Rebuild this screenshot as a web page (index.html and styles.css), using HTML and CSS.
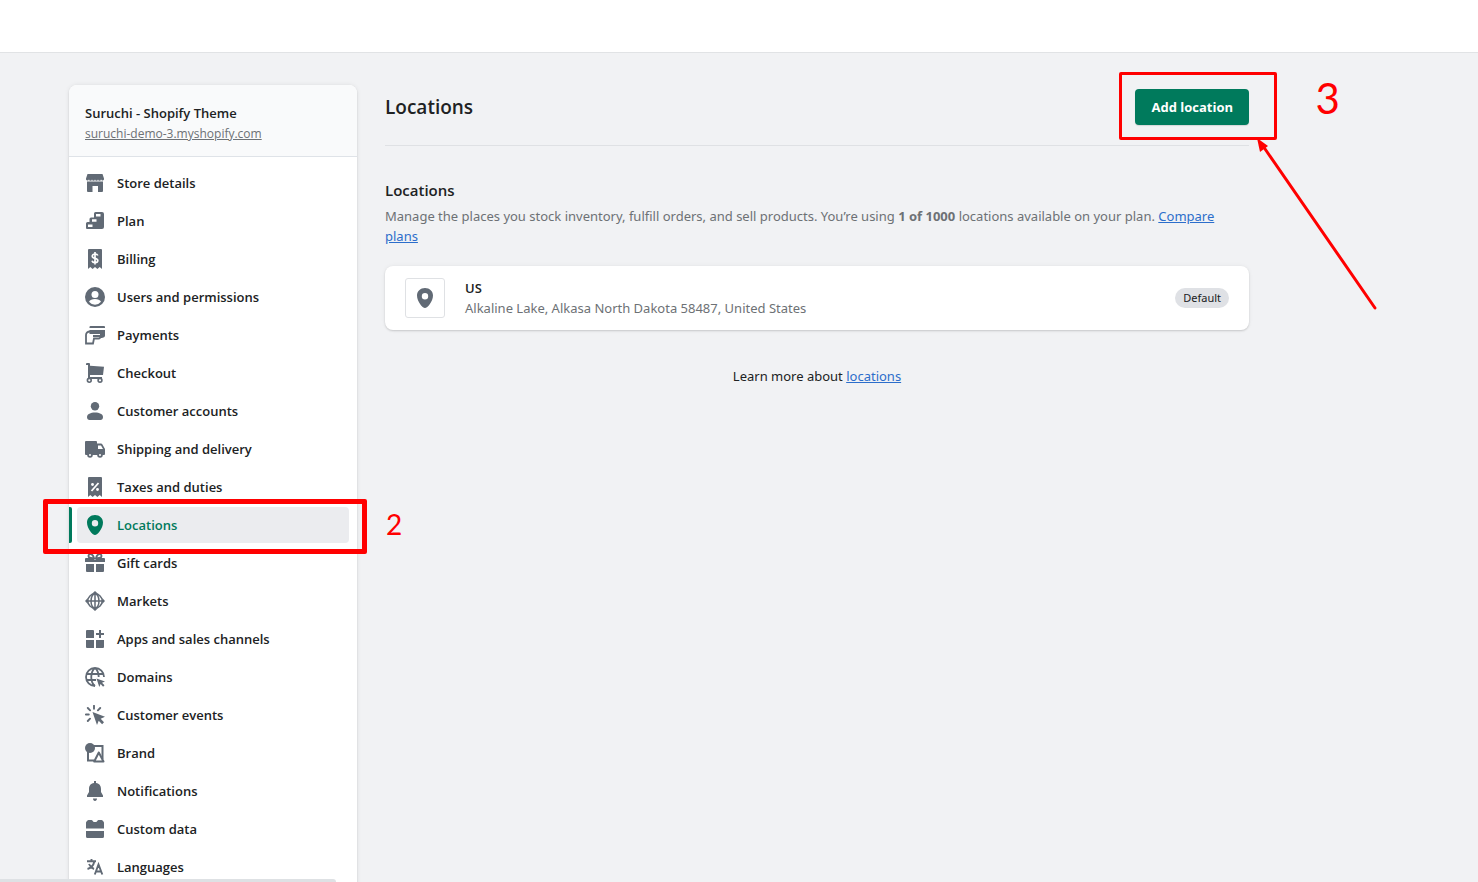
FILE: index.html
```html
<!DOCTYPE html>
<html lang="en">
<head>
<meta charset="utf-8">
<meta name="viewport" content="width=device-width, initial-scale=1">
<title>Locations - Settings</title>
<link rel="stylesheet" href="styles.css">
</head>
<body>
<div class="app">
  <header class="topbar"></header>
  <div class="page">
    <aside class="sidebar">
      <div class="store">
        <div class="store-name">Suruchi - Shopify Theme</div>
        <a class="store-link" href="#">suruchi-demo-3.myshopify.com</a>
      </div>
      <nav aria-label="Settings">
        <ul class="nav">
          <li><a class="nav-link" href="#"><svg class="icon" viewBox="0 0 20 20"><path d="M2.500 1h15L19 5.500a1.500 1.500 0 0 1-3 .8 1.500 1.500 0 0 1-3 0 1.500 1.500 0 0 1-3 0 1.500 1.500 0 0 1-3 0 1.500 1.500 0 0 1-3 0 1.500 1.500 0 0 1-3-.8z"/><path d="M2 8.500h16V18a1 1 0 0 1-1 1h-4v-6H7.500v6H3a1 1 0 0 1-1-1z"/></svg>Store details</a></li>
          <li><a class="nav-link" href="#"><svg class="icon" viewBox="0 0 20 20"><path fill-rule="evenodd" d="M10.500 1H17a2 2 0 0 1 2 2v13a2 2 0 0 1-2 2H2a1 1 0 0 1-1-1v-4.500A1.500 1.500 0 0 1 2.500 11H4.500V8A1.500 1.500 0 0 1 6 6.500h3v-4A1.500 1.500 0 0 1 10.500 1zM11 3v2.500h4.500V3zM7 8.200v2.500h4.500V8.200zM3 13.500V16h4.500v-2.500z"/></svg>Plan</a></li>
          <li><a class="nav-link" href="#"><svg class="icon" viewBox="0 0 20 20"><path d="M4 0h12a1 1 0 0 1 1 1v19l-2.300-2-2.300 2-2.400-2-2.400 2-2.300-2L3 20V1a1 1 0 0 1 1-1z"/><path d="M12.800 6.600C12.400 5.400 11.400 5 10 5c-1.600 0-2.700.8-2.700 2.200C7.300 10 12.800 8.500 12.800 11.500c0 1.400-1.200 2.200-2.800 2.200-1.500 0-2.600-.6-3-1.900M10 3v12.500" fill="none" stroke="#fff" stroke-width="1.700"/></svg>Billing</a></li>
          <li><a class="nav-link" href="#"><svg class="icon" viewBox="0 0 20 20"><circle cx="10" cy="10" r="10"/><circle cx="10" cy="7.500" r="3.500" fill="#fff"/><path d="M4 14.800c1-2 3.200-2.800 6-2.800s5 .8 6 2.800a7.700 7.700 0 0 1-12 0z" fill="#fff"/></svg>Users and permissions</a></li>
          <li><a class="nav-link" href="#"><svg class="icon" viewBox="0 0 20 20"><path d="M5.500 1H19a1 1 0 0 1 1 1v1H4.500V2a1 1 0 0 1 1-1z"/><path d="M4.500 5H20v5.500c0 2-2.500 2.500-5 2.500V9H4.500z"/><path d="M5 6.500C2.500 6.500 1 8 1 10v8.500h7l1-5h4.500c1.500 0 2-.8 2-2.500H8" fill="none" stroke="currentColor" stroke-width="1.800"/></svg>Payments</a></li>
          <li><a class="nav-link" href="#"><svg class="icon" viewBox="0 0 20 20"><path d="M2 0h2a1 1 0 0 1 1 1v1.700l14 1-1 8.300H5v2h12v2H4a1 1 0 0 1-1-1V2H1V1a1 1 0 0 1 1-1z"/><circle cx="4.300" cy="17.300" r="1.900" fill="#fff" stroke="currentColor" stroke-width="1.600"/><circle cx="15" cy="17.300" r="1.900" fill="#fff" stroke="currentColor" stroke-width="1.600"/></svg>Checkout</a></li>
          <li><a class="nav-link" href="#"><svg class="icon" viewBox="0 0 20 20"><circle cx="10" cy="5.200" r="4.200"/><path d="M2 16c0-2.800 3.600-4.500 8-4.500s8 1.700 8 4.500c0 2-1 3-2.500 3h-11C3 19 2 18 2 16z"/></svg>Customer accounts</a></li>
          <li><a class="nav-link" href="#"><svg class="icon" viewBox="0 0 20 20"><path fill-rule="evenodd" d="M1 2h10a1 1 0 0 1 1 1v1.500h4c.6 0 1 .3 1.300.8L20 10v5a1 1 0 0 1-1 1H1a1 1 0 0 1-1-1V3a1 1 0 0 1 1-1zm12 4.500V10h5l-2-3.500z"/><circle cx="5" cy="16" r="2.800"/><circle cx="15" cy="16" r="2.800"/><circle cx="5" cy="16" r="1" fill="#fff"/><circle cx="15" cy="16" r="1" fill="#fff"/></svg>Shipping and delivery</a></li>
          <li><a class="nav-link" href="#"><svg class="icon" viewBox="0 0 20 20"><path d="M4 0h12a1 1 0 0 1 1 1v19l-2.300-2-2.300 2-2.400-2-2.400 2-2.300-2L3 20V1a1 1 0 0 1 1-1z"/><path d="M13.500 6l-7 8" stroke="#fff" stroke-width="1.800"/><circle cx="7.500" cy="7.500" r="1.400" fill="#fff"/><circle cx="12.500" cy="12.500" r="1.400" fill="#fff"/></svg>Taxes and duties</a></li>
          <li class="marked"><a class="nav-link current" href="#" aria-current="page"><svg class="icon" viewBox="0 0 20 20"><path fill-rule="evenodd" d="M10 0c4.600 0 8 3.300 8 7.500C18 13.500 12.500 20 10 20S2 13.500 2 7.500C2 3.300 5.400 0 10 0zm0 5a3.200 3.200 0 1 0 0 6.400A3.200 3.200 0 0 0 10 5z"/></svg>Locations</a><span class="mark-box mark-nav"></span><span class="mark-number number-nav">2</span></li>
          <li><a class="nav-link" href="#"><svg class="icon" viewBox="0 0 20 20"><path d="M9 5C8 2 7 1 5.500 1a2 2 0 0 0-2 2.200C3.500 4.500 5 5.300 9 5zM11 5c1-3 2-4 3.500-4a2 2 0 0 1 2 2.200C16.500 4.500 15 5.300 11 5z" fill="none" stroke="currentColor" stroke-width="1.800"/><path d="M1 5h8.200v1.500h1.600V5H19a1 1 0 0 1 1 1v3H0V6a1 1 0 0 1 1-1zM1 11h8v8H2a1 1 0 0 1-1-1zM11 11h8v7a1 1 0 0 1-1 1h-7z"/></svg>Gift cards</a></li>
          <li><a class="nav-link" href="#"><svg class="icon" viewBox="0 0 20 20"><g fill="none" stroke="currentColor" stroke-width="1.500"><circle cx="10" cy="10" r="7.200"/><ellipse cx="10" cy="10" rx="4" ry="7.200"/><path d="M2 10h16M10 3v14"/></g><path d="M10 0l3 2.800H7zM10 20l3-2.800H7zM0 10l2.800-3v6zM20 10l-2.800-3v6z"/></svg>Markets</a></li>
          <li><a class="nav-link" href="#"><svg class="icon" viewBox="0 0 20 20"><path d="M2 1h6a1 1 0 0 1 1 1v7H1V2a1 1 0 0 1 1-1zM1 11h8v8H2a1 1 0 0 1-1-1zM11 11h8v7a1 1 0 0 1-1 1h-7zM14 1h2v3h3v2h-3v3h-2V6h-3V4h3z"/></svg>Apps and sales channels</a></li>
          <li><a class="nav-link" href="#"><svg class="icon" viewBox="0 0 20 20"><g fill="none" stroke="currentColor" stroke-width="1.800"><path d="M19 10A9 9 0 1 0 10 19M1.500 7h17M1.500 13H11M10 1C5 5 5 15 10 19M10 1c2.500 2 3.700 5 3.700 9"/></g><path d="M11.500 11.500l8.500 3-3 1.200 2.500 2.600-1.400 1.400-2.500-2.600L14.300 20z"/></svg>Domains</a></li>
          <li><a class="nav-link" href="#"><svg class="icon" viewBox="0 0 20 20"><path d="M7.500 7L20 11.800l-4.300 2 3.300 3.500-1.900 1.900-3.400-3.400-1.700 4.200z"/><path d="M9 .8v2.900M2.800 3l2.300 2.300M.8 9.500h3M5 13.700L2.800 16M15.200 3l-2.300 2.300" fill="none" stroke="currentColor" stroke-width="1.900" stroke-linecap="round"/></svg>Customer events</a></li>
          <li><a class="nav-link" href="#"><svg class="icon" viewBox="0 0 20 20"><circle cx="5" cy="5" r="5"/><path d="M9 3h8.500v13M3 9v8.500h6" fill="none" stroke="currentColor" stroke-width="2"/><path d="M13.800 9.500L9.200 18.500h9.300z" fill="#fff" stroke="currentColor" stroke-width="2" stroke-linejoin="round"/></svg>Brand</a></li>
          <li><a class="nav-link" href="#"><svg class="icon" viewBox="0 0 20 20"><path d="M9 0h2v2c3.500.5 5 3 5 6v3l2 3.500V16H2v-1.500L4 11V8c0-3 1.500-5.500 5-6zM8 17.500h4c0 1.500-.8 2.500-2 2.500s-2-1-2-2.500z"/></svg>Notifications</a></li>
          <li><a class="nav-link" href="#"><svg class="icon" viewBox="0 0 20 20"><path d="M1 9.500V4c0-1 .5-1.500 1-2s1-1 1.500-1h3C7.500 1 8 3 9 3h2c1 0 1.500-2 2.500-2h3c.5 0 1 .5 1.500 1s1 1 1 2v5.500zM1 12h18v5.500a1.500 1.500 0 0 1-1.500 1.500h-15A1.500 1.500 0 0 1 1 17.500z"/></svg>Custom data</a></li>
          <li><a class="nav-link" href="#"><svg class="icon" viewBox="0 0 20 20"><path d="M2 4.300h9M6.500 2v2.300M9.300 4.500C8.500 8.500 6 11 2.500 12M4 7c1 2.500 2.500 4 5 5M9.800 17.500l3.700-10 3.800 10M11 14.500h5" fill="none" stroke="currentColor" stroke-width="1.900"/></svg>Languages</a></li>
        </ul>
      </nav>
    </aside>
    <main class="main">
      <div class="heading">
        <h1>Locations</h1>
        <div class="marked">
          <button class="primary" type="button">Add location</button>
          <span class="mark-box mark-button"></span>
          <span class="mark-number number-button">3</span>
          <svg class="arrow" viewBox="0 0 124 176"><path d="M7 9l112 162" fill="none" stroke="#f00" stroke-width="3" stroke-linecap="round"/><path d="M1 1l11 8-8 6z" fill="#f00"/></svg>
        </div>
      </div>
      <section class="locations">
        <h2>Locations</h2>
        <p class="intro">Manage the places you stock inventory, fulfill orders, and sell products. You’re using <strong>1 of 1000</strong> locations available on your plan. <a href="#">Compare plans</a></p>
        <div class="card">
          <span class="thumb"><svg class="icon" viewBox="0 0 20 20"><path fill-rule="evenodd" d="M10 0c4.600 0 8 3.300 8 7.500C18 13.500 12.500 20 10 20S2 13.500 2 7.500C2 3.300 5.400 0 10 0zm0 5a3.200 3.200 0 1 0 0 6.400A3.200 3.200 0 0 0 10 5z"/></svg></span>
          <div class="place">
            <h3>US</h3>
            <div class="address">Alkaline Lake, Alkasa North Dakota 58487, United States</div>
          </div>
          <span class="badge">Default</span>
        </div>
        <p class="learn">Learn more about <a href="#">locations</a></p>
      </section>
    </main>
  </div>
  <div class="status"></div>
</div>
</body>
</html>
```
FILE: styles.css
```css
* {
  box-sizing: border-box;
}

body {
  margin: 0;
  background: #f1f2f4;
  color: #202223;
  font-family: "Noto Sans", "Open Sans", sans-serif;
  font-size: 13px;
  line-height: 20px;
}

h1, h2, h3, p, ul {
  margin: 0;
  padding: 0;
}

h1, h2, h3, .store, .nav, .primary {
  font-family: "Open Sans", "Noto Sans", sans-serif;
  font-weight: 600;
}

a {
  color: #2c6ecb;
}

.app {
  position: relative;
  height: 100vh;
  overflow: hidden;
}

.topbar {
  height: 53px;
  background: #fff;
  border-bottom: 1px solid #e1e3e5;
}

.page {
  display: flex;
  align-items: flex-start;
  gap: 28px;
  padding: 32px 229px 0 69px;
}

.sidebar {
  flex: 0 0 288px;
  background: #fff;
  border-radius: 8px;
  box-shadow: 0 0 5px rgba(23, 24, 24, 0.08), 0 1px 2px rgba(0, 0, 0, 0.12);
}

.store {
  padding: 16px 16px 13px;
  background: #f9fafb;
  border-bottom: 1px solid #dfe3e8;
  border-radius: 8px 8px 0 0;
}

.store-name {
  line-height: 24px;
}

.store-link {
  display: block;
  color: #6d7175;
  font-size: 12px;
  font-weight: 400;
  line-height: 18px;
}

.nav {
  display: flex;
  flex-direction: column;
  gap: 2px;
  padding: 8px;
  list-style: none;
}

.nav-link {
  display: flex;
  align-items: center;
  gap: 12px;
  height: 36px;
  padding: 0 8px;
  border-radius: 4px;
  color: #202223;
  text-decoration: none;
}

.icon {
  flex: none;
  width: 20px;
  height: 20px;
  color: #616a75;
  fill: currentColor;
}

.current {
  background: #ebecef;
  color: #007a5c;
}

.current .icon {
  color: #007a5c;
}

.current::before {
  content: "";
  position: absolute;
  top: 0;
  bottom: 0;
  left: -8px;
  width: 3px;
  background: #007a5c;
  border-radius: 0 2px 2px 0;
}

.main {
  flex: 1;
  min-width: 0;
  padding-top: 4px;
}

.heading {
  display: flex;
  align-items: center;
  justify-content: space-between;
  padding-bottom: 20px;
  border-bottom: 1px solid #dfe1e4;
}

h1 {
  font-size: 19px;
  line-height: 28px;
}

.primary {
  display: block;
  height: 36px;
  padding: 0 16px;
  border: 0;
  border-radius: 4px;
  background: #007a5c;
  box-shadow: 0 1px 1px rgba(0, 0, 0, 0.12);
  color: #fff;
  font-size: 13px;
  font-weight: 700;
}

.locations {
  padding-top: 34px;
}

h2 {
  margin-bottom: 6px;
  font-size: 15px;
  line-height: 20px;
}

.intro {
  margin-bottom: 20px;
  color: #6d7175;
}

.card {
  display: flex;
  align-items: center;
  gap: 20px;
  padding: 12px 20px;
  background: #fff;
  border-radius: 8px;
  box-shadow: 0 0 5px rgba(23, 24, 24, 0.05), 0 1px 2px rgba(0, 0, 0, 0.15);
}

.thumb {
  display: grid;
  place-items: center;
  width: 40px;
  height: 40px;
  border: 1px solid #dfe1e4;
  border-radius: 3px;
}

.place {
  flex: 1;
}

h3 {
  font-size: 13px;
}

.address {
  color: #6d7175;
}

.badge {
  padding: 0 8px;
  border-radius: 10px;
  background: #dfe1e5;
  font-size: 11px;
}

.learn {
  padding-top: 36px;
  text-align: center;
}

.marked {
  position: relative;
}

.mark-box {
  position: absolute;
  z-index: 2;
  border: 3px solid #f00;
  border-radius: 2px;
  pointer-events: none;
}

.mark-nav {
  inset: -8px -18px -11px -34px;
  border-width: 5px;
}

.mark-button {
  inset: -17px -28px -15px -16px;
}

.mark-number {
  position: absolute;
  color: #f00;
  font-family: Lato, sans-serif;
  font-weight: 400;
  line-height: 1;
}

.number-nav {
  top: 3px;
  left: 309px;
  font-size: 28px;
}

.number-button {
  top: -12px;
  left: 180px;
  font-size: 42px;
}

.arrow {
  position: absolute;
  top: 48px;
  right: -131px;
  width: 124px;
  height: 176px;
}

.status {
  position: absolute;
  bottom: 0;
  left: 0;
  width: 336px;
  height: 3px;
  background: #dee1e4;
  border-top-right-radius: 4px;
}
```
